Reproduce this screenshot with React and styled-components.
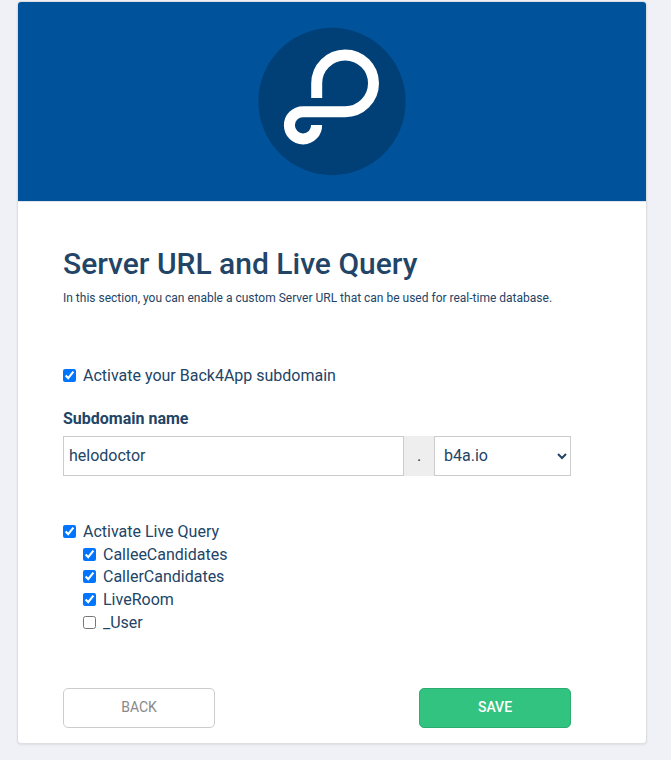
import React, { useState } from "react";
import styled, { createGlobalStyle } from "styled-components";

const GlobalStyle = createGlobalStyle`
  * { box-sizing: border-box; }
  body {
    margin: 0;
    background: #f0f1f6;
    color: #224466;
    font-family: Roboto, "Liberation Sans", sans-serif;
    font-size: 16px;
  }
`;

const Page = styled.main`
  min-height: 760px;
  padding: 1px 24px 16px 17px;
`;

const Card = styled.section`
  height: 743px;
  background: #fff;
  border: 1px solid #dcdee2;
  border-radius: 4px;
  overflow: hidden;
  box-shadow: 0 1px 2px rgba(0, 0, 0, 0.08);
`;

const Banner = styled.header`
  height: 200px;
  display: flex;
  justify-content: center;
  padding-top: 25px;
  background: #00539b;
  border-bottom: 1px solid #dfe5ea;
`;

const Logo = styled.svg`
  width: 148px;
  height: 149px;
`;

const Form = styled.form`
  width: 508px;
  margin-left: 45px;
  padding-top: 43px;
`;

const Title = styled.h1`
  margin: 0;
  font-size: 30px;
  font-weight: 500;
  line-height: 38px;
  white-space: nowrap;
`;

const Intro = styled.p`
  margin: 6px 0 57px;
  font-size: 12px;
  line-height: 18px;
  white-space: nowrap;
`;

const Option = styled.label`
  display: flex;
  align-items: center;
  height: 22.75px;
  margin-left: ${({ $nested }) => ($nested ? "20px" : "0")};
`;

const Checkbox = styled.input`
  width: 13px;
  height: 13px;
  margin: 0 7px 0 0;
`;

const FieldLabel = styled.label`
  display: block;
  margin: 20px 0 6px;
  font-weight: 700;
  line-height: 23px;
`;

const FieldRow = styled.div`
  display: grid;
  grid-template-columns: 341px 30px 137px;
  height: 40px;
  margin-bottom: 44.25px;
`;

const TextField = styled.input`
  border: 1px solid #ccc;
  padding: 0 5px 1px;
  color: inherit;
  font: inherit;
  outline: none;
`;

const Dot = styled.span`
  display: flex;
  align-items: center;
  justify-content: center;
  padding-bottom: 1px;
  background: #eee;
`;

const Select = styled.select`
  border: 1px solid #ccc;
  border-radius: 0;
  padding: 0 0 1px 5px;
  background: #fff;
  color: inherit;
  font: inherit;
`;

const Actions = styled.div`
  display: flex;
  justify-content: space-between;
  margin-top: 53.75px;
`;

const Button = styled.button`
  width: 152px;
  height: 40px;
  padding: 0 0 2px;
  border: 1px solid ${({ $primary }) => ($primary ? "#2cae71" : "#ccc")};
  border-radius: 5px;
  background: ${({ $primary }) => ($primary ? "#32c381" : "#fff")};
  color: ${({ $primary }) => ($primary ? "#fff" : "#888")};
  font-family: inherit;
  font-size: 14px;
  font-weight: ${({ $primary }) => ($primary ? 500 : 400)};
`;

const initialClasses = {
  CalleeCandidates: true,
  CallerCandidates: true,
  LiveRoom: true,
  _User: false,
};

function CheckOption({ label, checked, onChange, nested }) {
  return (
    <Option $nested={nested}>
      <Checkbox type="checkbox" checked={checked} onChange={onChange} />
      {label}
    </Option>
  );
}

export default function App() {
  const [subdomain, setSubdomain] = useState(true);
  const [liveQuery, setLiveQuery] = useState(true);
  const [classes, setClasses] = useState(initialClasses);

  return (
    <Page>
      <GlobalStyle />
      <Card>
        <Banner>
          <Logo viewBox="0 0 148 149" role="img" aria-label="Parse">
            <circle cx="74" cy="74.5" r="73.7" fill="#004077" />
            <path
              d="M58.7 71V56.4A28.4 28.4 0 1 1 87.1 84.7H45A13.6 13.6 0 1 0 58.6 98"
              fill="none"
              stroke="#fff"
              strokeWidth="11"
            />
          </Logo>
        </Banner>
        <Form onSubmit={(e) => e.preventDefault()}>
          <Title>Server URL and Live Query</Title>
          <Intro>
            In this section, you can enable a custom Server URL that can be used
            for real-time database.
          </Intro>
          <CheckOption
            label="Activate your Back4App subdomain"
            checked={subdomain}
            onChange={() => setSubdomain(!subdomain)}
          />
          <FieldLabel htmlFor="subdomain">Subdomain name</FieldLabel>
          <FieldRow>
            <TextField id="subdomain" defaultValue="helodoctor" />
            <Dot>.</Dot>
            <Select defaultValue="b4a.io" aria-label="Domain">
              <option>b4a.io</option>
            </Select>
          </FieldRow>
          <CheckOption
            label="Activate Live Query"
            checked={liveQuery}
            onChange={() => setLiveQuery(!liveQuery)}
          />
          {Object.entries(classes).map(([name, checked]) => (
            <CheckOption
              key={name}
              nested
              label={name}
              checked={checked}
              onChange={() => setClasses({ ...classes, [name]: !checked })}
            />
          ))}
          <Actions>
            <Button type="button">BACK</Button>
            <Button type="submit" $primary>
              SAVE
            </Button>
          </Actions>
        </Form>
      </Card>
    </Page>
  );
}
